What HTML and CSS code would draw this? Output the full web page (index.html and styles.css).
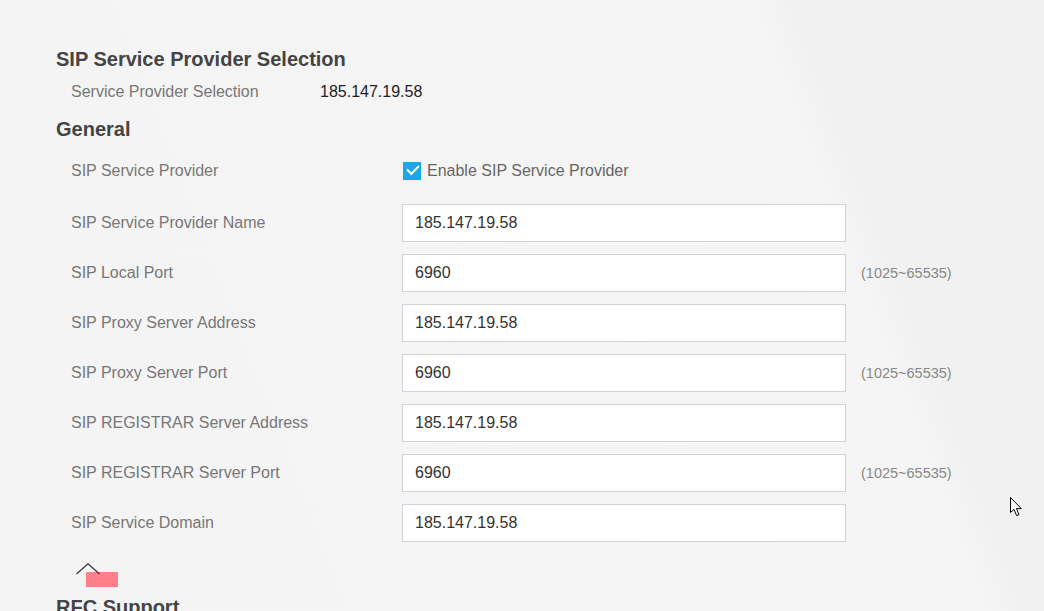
FILE: index.html
```html
<!DOCTYPE html>
<html lang="en">
<head>
  <meta charset="UTF-8">
  <title>SIP Service Provider</title>
  <link rel="stylesheet" href="styles.css">
</head>
<body>

  <div class="page">
    <h2 class="section-title">SIP Service Provider Selection</h2>
    <div class="info-row">
      <span class="info-label">Service Provider Selection</span>
      <span class="info-value">185.147.19.58</span>
    </div>

    <h2 class="section-title general">General</h2>

    <div class="fields">
      <div class="field check-field">
        <span class="field-label">SIP Service Provider</span>
        <label class="check">
          <input type="checkbox" checked>
          <span class="box"></span>
          Enable SIP Service Provider
        </label>
      </div>

      <div class="field">
        <span class="field-label">SIP Service Provider Name</span>
        <input class="text-input" type="text" value="185.147.19.58">
      </div>

      <div class="field">
        <span class="field-label">SIP Local Port</span>
        <input class="text-input" type="text" value="6960">
        <span class="hint">(1025~65535)</span>
      </div>

      <div class="field">
        <span class="field-label">SIP Proxy Server Address</span>
        <input class="text-input" type="text" value="185.147.19.58">
      </div>

      <div class="field">
        <span class="field-label">SIP Proxy Server Port</span>
        <input class="text-input" type="text" value="6960">
        <span class="hint">(1025~65535)</span>
      </div>

      <div class="field">
        <span class="field-label">SIP REGISTRAR Server Address</span>
        <input class="text-input" type="text" value="185.147.19.58">
      </div>

      <div class="field">
        <span class="field-label">SIP REGISTRAR Server Port</span>
        <input class="text-input" type="text" value="6960">
        <span class="hint">(1025~65535)</span>
      </div>

      <div class="field">
        <span class="field-label">SIP Service Domain</span>
        <input class="text-input" type="text" value="185.147.19.58">
      </div>
    </div>

    <div class="fold">
      <svg class="fold-arrow" width="24" height="12" viewBox="0 0 24 12">
        <polyline points="0.5,11 12,0.8 23.5,11" fill="none" stroke="#333" stroke-width="1.2"/>
      </svg>
      <span class="fold-mark"></span>
    </div>

    <h2 class="section-title rfc">RFC Support</h2>
  </div>

  <svg class="pointer" width="14" height="20" viewBox="0 0 14 20">
    <path d="M0.5 0.5 L0.5 15.5 L4 12.3 L6.6 18.6 L9 17.6 L6.5 11.6 L11.3 11.6 Z" fill="#fff" stroke="#000" stroke-width="1" stroke-linejoin="round"/>
  </svg>

</body>
</html>
```

FILE: styles.css
```css
html {
  height: 100%;
  background: linear-gradient(69deg, #f4f4f4 0%, #f5f5f5 77%, #f1f1f1 80%, #f1f1f1 100%);
}

body {
  margin: 0;
  font-family: 'Liberation Sans', Arial, sans-serif;
  overflow: hidden;
  height: 100%;
}

.page {
  padding: 47px 0 0 56px;
}

.section-title {
  margin: 0;
  font-size: 20px;
  line-height: 24px;
  font-weight: bold;
  color: #444;
}

.general {
  margin-top: 15px;
}

.rfc {
  margin-top: 8px;
}

.info-row {
  display: flex;
  margin-top: 11px;
  font-size: 16px;
  line-height: 20px;
}

.info-label {
  width: 264px;
  padding-left: 15px;
  box-sizing: border-box;
  color: #777;
}

.info-value {
  color: #222;
}

.fields {
  display: flex;
  flex-direction: column;
  gap: 12px;
  margin-top: 11px;
}

.field {
  display: flex;
  align-items: center;
  height: 38px;
  font-size: 16px;
}

.check-field {
  margin-bottom: 2px;
}

.field-label {
  width: 346px;
  padding-left: 15px;
  box-sizing: border-box;
  color: #777;
}

.text-input {
  width: 444px;
  height: 38px;
  box-sizing: border-box;
  border: 1px solid #cfd3d9;
  background: #fff;
  padding: 0 12px;
  font-family: inherit;
  font-size: 16px;
  color: #333;
  outline: none;
}

.hint {
  margin-left: 15px;
  font-size: 14.5px;
  color: #888;
}

.check {
  display: flex;
  align-items: center;
  margin-left: 1px;
  color: #666;
}

.check input {
  display: none;
}

.check .box {
  position: relative;
  width: 18px;
  height: 18px;
  margin-right: 6px;
  background: #1ba6e8;
}

.check .box:after {
  content: "";
  position: absolute;
  left: 4px;
  top: 3px;
  width: 10px;
  height: 5px;
  border-left: 2px solid #fff;
  border-bottom: 2px solid #fff;
  transform: rotate(-45deg);
}

.fold {
  position: relative;
  height: 24px;
  margin-top: 21px;
  padding: 9px 0 0 30px;
  box-sizing: border-box;
}

.fold-arrow {
  position: absolute;
  left: 20px;
  top: 0;
}

.fold-mark {
  display: block;
  width: 32px;
  height: 15px;
  background: #ff7f8a;
}

.pointer {
  position: fixed;
  left: 1010px;
  top: 497px;
}
```
